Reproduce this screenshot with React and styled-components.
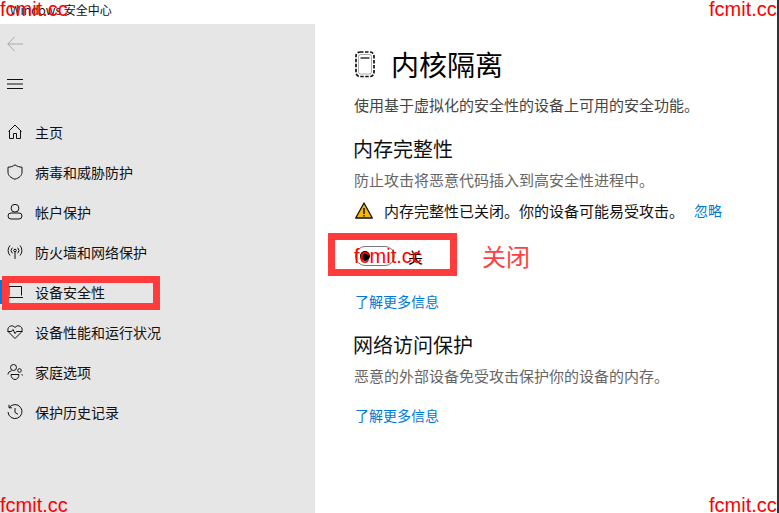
import React from "react";
import styled, { createGlobalStyle } from "styled-components";

const Global = createGlobalStyle`
  html, body { margin: 0; padding: 0; background: #fff; }
  * { box-sizing: border-box; }
`;

const cjk = `"Noto Sans CJK SC", "Liberation Sans", sans-serif`;

const Page = styled.div`
  position: relative;
  width: 779px;
  height: 513px;
  overflow: hidden;
  display: flex;
  flex-direction: column;
  background: #fff;
  border-right: 2px solid #333;
  font-family: ${cjk};
  color: #000;
`;
const TitleBar = styled.div`
  height: 24px;
  flex: none;
  padding: 0 0 6px 10px;
  display: flex;
  align-items: center;
  font-size: 12px;
  color: #111;
`;
const Body = styled.div`
  flex: 1;
  display: flex;
  min-height: 0;
`;
const Sidebar = styled.nav`
  width: 315px;
  flex: none;
  background: #e6e6e6;
  display: flex;
  flex-direction: column;
`;
const ToolRow = styled.div`
  height: 40px;
  padding-left: 7px;
  display: flex;
  align-items: center;
`;
const NavList = styled.div`
  margin-top: 8px;
  display: flex;
  flex-direction: column;
`;
const NavRow = styled.div`
  position: relative;
  height: 40px;
  padding-left: 7px;
  display: flex;
  align-items: center;
  gap: 12px;
  font-size: 14px;
  color: #111;
  svg { flex: none; }
`;
const ActiveBar = styled.span`
  position: absolute;
  left: 0;
  top: 8px;
  width: 2px;
  height: 24px;
  background: #0078d7;
`;
const Main = styled.main`
  flex: 1;
  padding: 20px 0 0 38px;
`;
const TitleRow = styled.div`
  display: flex;
  align-items: center;
  gap: 15px;
  height: 40px;
  padding-left: 2px;
`;
const Title = styled.h1`
  margin: 0;
  font-size: 28px;
  font-weight: 400;
  line-height: 40px;
`;
const Desc = styled.p`
  margin: ${(p) => p.$top}px 0 0 1px;
  font-size: 15px;
  line-height: 20px;
  color: ${(p) => p.$color || "#444"};
`;
const Heading = styled.h2`
  margin: ${(p) => p.$top}px 0 0;
  font-size: 20px;
  font-weight: 400;
  line-height: 28px;
  color: #111;
`;
const WarnRow = styled.div`
  margin: 10px 0 0 2px;
  display: flex;
  align-items: center;
  height: 20px;
  font-size: 15px;
  color: #111;
`;
const WarnText = styled.span`
  margin-left: 11px;
`;
const Dismiss = styled.a`
  margin-left: 10px;
  font-size: 14px;
  color: #0078d7;
`;
const ToggleRow = styled.div`
  margin: 26px 0 0 2px;
  display: flex;
  align-items: center;
  gap: 13px;
  height: 20px;
  font-size: 15px;
`;
const ToggleTrack = styled.span`
  width: 40px;
  height: 20px;
  border: 1px solid #777;
  border-radius: 10px;
  display: flex;
  align-items: center;
  padding-left: 4px;
`;
const ToggleKnob = styled.span`
  width: 10px;
  height: 10px;
  border-radius: 50%;
  background: #000;
`;
const LearnMore = styled.a`
  display: block;
  margin: ${(p) => p.$top}px 0 0 2px;
  font-size: 14px;
  line-height: 20px;
  color: #0078d7;
`;
const Watermark = styled.span`
  position: absolute;
  left: ${(p) => p.$x}px;
  top: ${(p) => p.$y}px;
  font-family: "Liberation Sans", Arial, sans-serif;
  font-size: 20px;
  line-height: 23px;
  color: #f00;
  white-space: nowrap;
`;
const RedFrame = styled.div`
  position: absolute;
  left: ${(p) => p.$x}px;
  top: ${(p) => p.$y}px;
  width: ${(p) => p.$w}px;
  height: ${(p) => p.$h}px;
  border: 7px solid #ff3b3b;
`;
const Annotation = styled.span`
  position: absolute;
  left: 482px;
  top: 239px;
  font-size: 24px;
  line-height: 34px;
  color: #ff4040;
`;

const Ic = ({ children, w = 16, h = 16, color = "#111", sw = 1 }) => (
  <svg width={w} height={h} viewBox={`0 0 ${w} ${h}`} fill="none" stroke={color} strokeWidth={sw}>
    {children}
  </svg>
);

const icons = {
  home: <Ic><path d="M1.5 7.500 8 1l6.500 6.500M2.500 6.500v8h4V9.500h3v5h4v-8" /></Ic>,
  shield: <Ic><path d="M8 .8c2.200 1.600 4.400 2.300 7 2.400v5c0 3.400-2.900 5.800-7 7-4.100-1.200-7-3.600-7-7v-5c2.600-.1 4.800-.8 7-2.400z" /></Ic>,
  user: <Ic><circle cx="8" cy="4.200" r="3.900" /><rect x="1" y="9" width="14" height="6" rx="3" /></Ic>,
  wifi: <Ic><circle cx="8" cy="6.500" r="1.300" /><path d="M8 8v7M5.300 9.300a4 4 0 0 1 0-5.600M10.700 3.700a4 4 0 0 1 0 5.600M3 11.500a7.500 7.500 0 0 1 0-10M13 1.500a7.500 7.500 0 0 1 0 10" /></Ic>,
  laptop: <Ic><path d="M2 11.500V2.500h12.500v9M.5 13.500h15.500" /></Ic>,
  heart: <Ic><path d="M8 14.500 2 8.500C.2 6.500.6 3.700 2.500 2.500 4.500 1.200 6.800 1.800 8 3.500c1.200-1.700 3.500-2.300 5.500-1 1.900 1.200 2.300 4 .5 6l-6 6z" /><path d="M.3 7.500h4.200l1.500-2 2 4 1.500-2h6.200" /></Ic>,
  family: <Ic><circle cx="6.500" cy="3.500" r="3" /><circle cx="12.500" cy="6.500" r="1.800" /><path d="M1 10.500c0-2 1.500-3.500 3.500-3.500M4 10.500h8c0 3-1.800 5-4 5s-4-2-4-5zM14.500 10c.7.5.9 1 .9 1.500" /></Ic>,
  history: <Ic><path d="M2.300 3.500A7 7 0 1 1 1 8M2 .8v3h3M8 4v4.500l3 1.800" /></Ic>,
};

const navItems = [
  ["home", "主页"],
  ["shield", "病毒和威胁防护"],
  ["user", "帐户保护"],
  ["wifi", "防火墙和网络保护"],
  ["laptop", "设备安全性", true],
  ["heart", "设备性能和运行状况"],
  ["family", "家庭选项"],
  ["history", "保护历史记录"],
];

export default function App() {
  return (
    <Page>
      <Global />
      <TitleBar>Windows 安全中心</TitleBar>
      <Body>
        <Sidebar>
          <ToolRow>
            <Ic color="#a6a6a6">
              <path d="M.8 8h15.200M7.500 1 .8 8l6.700 7" />
            </Ic>
          </ToolRow>
          <ToolRow>
            <Ic>
              <path d="M0 3.500h16M0 8h16M0 12.500h16" />
            </Ic>
          </ToolRow>
          <NavList>
            {navItems.map(([icon, label, active]) => (
              <NavRow key={label}>
                {active && <ActiveBar />}
                {icons[icon]}
                <span>{label}</span>
              </NavRow>
            ))}
          </NavList>
        </Sidebar>
        <Main>
          <TitleRow>
            <Ic w={21} h={27} sw={1.7}>
              <rect x="1" y="1" width="18" height="24.500" rx="4" strokeDasharray="3.500 1.500" />
              <path d="M5.500 7h9" strokeWidth="1.300" />
              <rect x="3.500" y="3.500" width="13" height="19.500" rx="2" strokeWidth="1" opacity=".35" />
            </Ic>
            <Title>内核隔离</Title>
          </TitleRow>
          <Desc $top={11}>使用基于虚拟化的安全性的设备上可用的安全功能。</Desc>
          <Heading $top={20}>内存完整性</Heading>
          <Desc $top={7} $color="#666">防止攻击将恶意代码插入到高安全性进程中。</Desc>
          <WarnRow>
            <svg width="18" height="17" viewBox="0 0 18 17">
              <path d="M9 1 17.300 16H.7z" fill="#f5b800" stroke="#111" strokeWidth="1.300" strokeLinejoin="round" />
              <path d="M9 6v6M9 13v1.500" stroke="#111" strokeWidth="1.500" />
            </svg>
            <WarnText>内存完整性已关闭。你的设备可能易受攻击。</WarnText>
            <Dismiss>忽略</Dismiss>
          </WarnRow>
          <ToggleRow>
            <ToggleTrack>
              <ToggleKnob />
            </ToggleTrack>
            <span>关</span>
          </ToggleRow>
          <LearnMore $top={25}>了解更多信息</LearnMore>
          <Heading $top={20}>网络访问保护</Heading>
          <Desc $top={7} $color="#666">恶意的外部设备免受攻击保护你的设备的内存。</Desc>
          <LearnMore $top={19}>了解更多信息</LearnMore>
        </Main>
      </Body>

      <RedFrame $x={2} $y={276} $w={158} $h={34} />
      <RedFrame $x={328} $y={233} $w={129} $h={43} />
      <Annotation>关闭</Annotation>
      <Watermark $x={0} $y={-2}>fcmit.cc</Watermark>
      <Watermark $x={709} $y={-2}>fcmit.cc</Watermark>
      <Watermark $x={0} $y={494}>fcmit.cc</Watermark>
      <Watermark $x={709} $y={494}>fcmit.cc</Watermark>
      <Watermark $x={354} $y={245}>fcmit.cc</Watermark>
    </Page>
  );
}
